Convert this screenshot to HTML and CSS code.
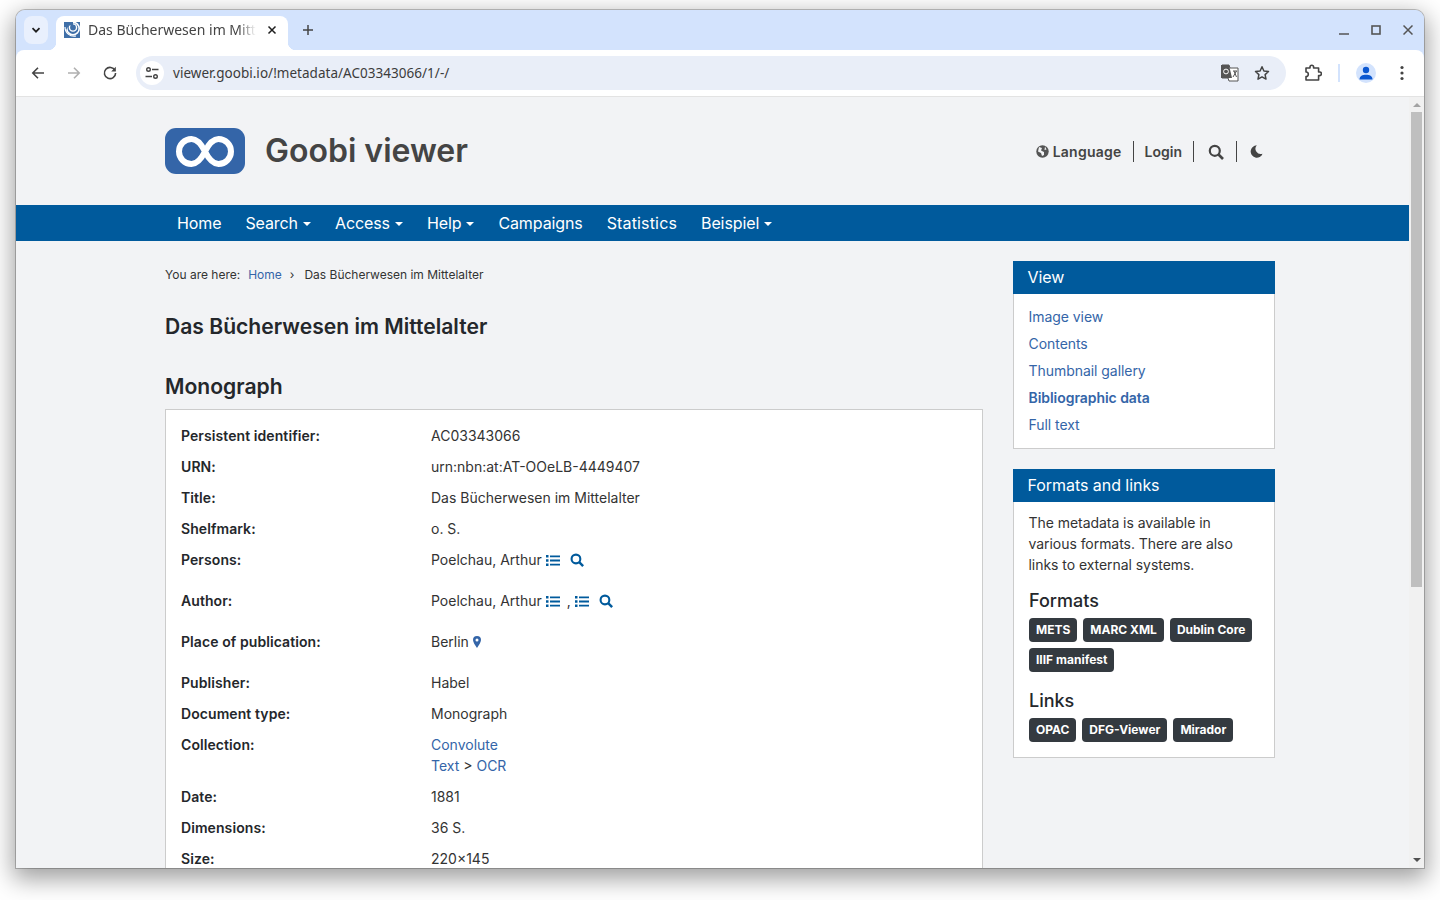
FILE: index.html
```html
<!DOCTYPE html>
<html lang="en">
<head>
    <meta charset="UTF-8">
    <title>Das Bücherwesen im Mittelalter</title>
    <link rel="stylesheet" href="styles.css">
</head>
<body>
<div class="window">
    <div class="tabstrip">
        <div class="tab-menu">
            <svg width="12" height="12" viewBox="0 0 12 12"><path d="M2.5 4.2 6 7.700l3.500-3.500" fill="none" stroke="#1f1f1f" stroke-width="1.700"/></svg>
        </div>
        <div class="tab">
            <svg class="favicon" width="16" height="16" viewBox="0 0 16 16">
                <rect width="16" height="16" fill="#3f6fa8"/>
                <circle cx="9" cy="6.500" r="6.200" fill="none" stroke="#fff" stroke-width="1.600"/>
                <circle cx="9" cy="5.500" r="3.600" fill="none" stroke="#fff" stroke-width="1.400"/>
                <path d="M0 0h9v3.500H5L0 11z" fill="#3f6fa8"/>
                <path d="M1 5c0 6 5 10 11 9" fill="none" stroke="#fff" stroke-width="1.200"/>
            </svg>
            <span class="tab-title">Das Bücherwesen im Mittelalter</span>
            <svg class="tab-close" width="10" height="10" viewBox="0 0 10 10"><path d="M1.500 1.500l7 7m0-7l-7 7" stroke="#1f1f1f" stroke-width="1.500"/></svg>
        </div>
        <svg class="new-tab" width="12" height="12" viewBox="0 0 12 12"><path d="M6 1v10M1 6h10" stroke="#444" stroke-width="1.500"/></svg>
        <div class="window-controls">
            <svg width="10" height="10" viewBox="0 0 10 10"><path d="M0 9h10" stroke="#555" stroke-width="1.500"/></svg>
            <svg width="10" height="10" viewBox="0 0 10 10"><rect x="1" y="1" width="8" height="8" fill="none" stroke="#555" stroke-width="1.600"/></svg>
            <svg width="10" height="10" viewBox="0 0 10 10"><path d="M.5.5l9 9m0-9l-9 9" stroke="#555" stroke-width="1.500"/></svg>
        </div>
    </div>

    <div class="toolbar">
        <div class="nav-buttons">
            <svg width="16" height="16" viewBox="0 0 16 16"><path d="M14 8H3M8 2.800 2.800 8 8 13.200" fill="none" stroke="#444" stroke-width="1.600"/></svg>
            <svg width="16" height="16" viewBox="0 0 16 16"><path d="M2 8h11M8 2.800 13.200 8 8 13.200" fill="none" stroke="#b0b0b0" stroke-width="1.600"/></svg>
            <svg width="16" height="16" viewBox="0 0 16 16"><path d="M13 5.500A5.600 5.600 0 1 0 13.600 8" fill="none" stroke="#444" stroke-width="1.600"/><path d="M13.800 1.800v4.600H9.200z" fill="#444"/></svg>
        </div>
        <div class="omnibox">
            <div class="site-info">
                <svg width="14" height="14" viewBox="0 0 14 14" fill="none" stroke="#444" stroke-width="1.400"><circle cx="3.500" cy="3.500" r="1.800"/><path d="M7 3.500h6.500M.5 10.500H7"/><circle cx="10.500" cy="10.500" r="1.800"/></svg>
            </div>
            <span class="url">viewer.goobi.io/!metadata/AC03343066/1/-/</span>
            <svg class="omni-translate" width="20" height="18" viewBox="0 0 20 18">
                <path d="M2 1h7l1 3h8v13H9l-1-3H2z" fill="#fff" stroke="#555" stroke-width="1"/>
                <path d="M1 1h8l3 13H1z" fill="#555"/>
                <circle cx="6" cy="7.500" r="2.400" fill="none" stroke="#fff" stroke-width="1"/>
                <path d="M13 7h4m-3 0 2.500 6M16.500 7 13 13" fill="none" stroke="#555" stroke-width="1"/>
            </svg>
            <svg class="omni-star" width="16" height="16" viewBox="0 0 16 16"><path d="M8 1.800l1.900 4.200 4.600.5-3.400 3.100.9 4.500L8 11.800l-4 2.300.9-4.500L1.500 6.500l4.600-.5z" fill="none" stroke="#444" stroke-width="1.500" stroke-linejoin="round"/></svg>
        </div>
        <svg class="ext-icon" width="18" height="18" viewBox="0 0 18 18"><path d="M2 4h4V3a1.800 1.800 0 0 1 3.600 0v1h5v4h1a1.800 1.800 0 0 1 0 3.600h-1V16H2v-3.500c1.800 0 2.300-1.200 2.300-2.300S3.800 8 2 8z" fill="none" stroke="#444" stroke-width="1.600" stroke-linejoin="round"/></svg>
        <span class="toolbar-sep"></span>
        <div class="avatar">
            <svg width="14" height="14" viewBox="0 0 14 14" fill="#0b57d0"><circle cx="7" cy="4" r="3.200"/><path d="M.5 13.500c0-3.500 3-4.800 6.500-4.800s6.500 1.300 6.500 4.800z"/></svg>
        </div>
        <svg class="menu-dots" width="4" height="16" viewBox="0 0 4 16" fill="#444"><circle cx="2" cy="2.500" r="1.600"/><circle cx="2" cy="8" r="1.600"/><circle cx="2" cy="13.500" r="1.600"/></svg>
    </div>

    <div class="viewport">
        <div class="page">
            <header class="site-header">
                <div class="brand">
                    <svg class="logo" width="80" height="46" viewBox="0 0 80 46">
                        <rect width="80" height="46" rx="11" fill="#3465a8"/>
                        <path d="M40 23.500C36 15.500 32 11 26.500 11a12.500 12.500 0 0 0 0 25c5.500 0 9.500-4.500 13.500-12.500S48 11 53.500 11a12.500 12.500 0 0 1 0 25c-5.500 0-9.500-4.500-13.500-12.500z" fill="none" stroke="#fff" stroke-width="6"/>
                    </svg>
                    <span class="brand-name">Goobi viewer</span>
                </div>
                <div class="header-links">
                    <a class="header-link link-lang">
                        <svg width="13" height="13" viewBox="0 0 13 13"><circle cx="6.500" cy="6.500" r="6.200" fill="#555"/><path d="M3 2l3 1-1 2.500 3 1.500v3l-2 1-1-3-3-1.500zM9 1.500l1.500 3-2 .5z" fill="#f2f3f5"/></svg>
                        Language
                    </a>
                    <a class="header-link">Login</a>
                    <a class="header-link link-search">
                        <svg width="16" height="16" viewBox="0 0 16 16" fill="none" stroke="#444" stroke-width="2.200"><circle cx="6.800" cy="6.800" r="5"/><path d="M10.500 10.500 15 15" stroke-width="2.600"/></svg>
                    </a>
                    <a class="header-link link-theme">
                        <svg width="13" height="13" viewBox="0 0 14 14"><path d="M7.300.4A6.600 6.600 0 1 0 13.500 9.300 5.600 5.600 0 0 1 7.300.4z" fill="#444"/></svg>
                    </a>
                </div>
            </header>

            <nav class="main-nav">
                <a>Home</a>
                <a class="caret">Search</a>
                <a class="caret">Access</a>
                <a class="caret">Help</a>
                <a>Campaigns</a>
                <a class="nav-wide">Statistics</a>
                <a class="caret">Beispiel</a>
            </nav>

            <div class="columns">
                <main class="content">
                    <div class="breadcrumb">
                        <span>You are here:</span>
                        <a>Home</a>
                        <span class="crumb-sep">›</span>
                        <span class="crumb-current">Das Bücherwesen im Mittelalter</span>
                    </div>
                    <h1>Das Bücherwesen im Mittelalter</h1>
                    <h2>Monograph</h2>
                    <div class="meta-box">
                        <div class="meta-row"><div class="meta-label">Persistent identifier:</div><div>AC03343066</div></div>
                        <div class="meta-row"><div class="meta-label">URN:</div><div>urn:nbn:at:AT-OOeLB-4449407</div></div>
                        <div class="meta-row"><div class="meta-label">Title:</div><div>Das Bücherwesen im Mittelalter</div></div>
                        <div class="meta-row"><div class="meta-label">Shelfmark:</div><div>o. S.</div></div>
                        <div class="meta-row tall">
                            <div class="meta-label">Persons:</div>
                            <div class="meta-value">Poelchau, Arthur
                                <svg class="list-icon" width="14" height="11" viewBox="0 0 14 11"><use href="#icon-list"/></svg>
                                <svg class="search-icon" width="14" height="14" viewBox="0 0 16 16"><use href="#icon-search"/></svg>
                            </div>
                        </div>
                        <div class="meta-row tall">
                            <div class="meta-label">Author:</div>
                            <div class="meta-value">Poelchau, Arthur
                                <svg class="list-icon" width="14" height="11" viewBox="0 0 14 11"><use href="#icon-list"/></svg>
                                <span class="comma">,</span>
                                <svg class="list-icon" width="14" height="11" viewBox="0 0 14 11"><use href="#icon-list"/></svg>
                                <svg class="search-icon" width="14" height="14" viewBox="0 0 16 16"><use href="#icon-search"/></svg>
                            </div>
                        </div>
                        <div class="meta-row tall">
                            <div class="meta-label">Place of publication:</div>
                            <div class="meta-value">Berlin
                                <svg class="pin-icon" width="8" height="12" viewBox="0 0 8 12"><path fill-rule="evenodd" d="M4 0a4 4 0 0 1 4 4c0 2.300-2.400 5.500-4 8C2.400 9.500 0 6.300 0 4a4 4 0 0 1 4-4zm0 2.500a1.500 1.500 0 1 0 0 3 1.500 1.500 0 0 0 0-3z" fill="#3465a8"/></svg>
                            </div>
                        </div>
                        <div class="meta-row"><div class="meta-label">Publisher:</div><div>Habel</div></div>
                        <div class="meta-row"><div class="meta-label">Document type:</div><div>Monograph</div></div>
                        <div class="meta-row">
                            <div class="meta-label">Collection:</div>
                            <div><a>Convolute</a><br><a>Text</a> &gt; <a>OCR</a></div>
                        </div>
                        <div class="meta-row"><div class="meta-label">Date:</div><div>1881</div></div>
                        <div class="meta-row"><div class="meta-label">Dimensions:</div><div>36 S.</div></div>
                        <div class="meta-row"><div class="meta-label">Size:</div><div>220×145</div></div>
                    </div>
                </main>

                <aside class="sidebar">
                    <section class="widget">
                        <h3>View</h3>
                        <div class="widget-body view-links">
                            <a>Image view</a>
                            <a>Contents</a>
                            <a>Thumbnail gallery</a>
                            <a class="active">Bibliographic data</a>
                            <a>Full text</a>
                        </div>
                    </section>
                    <section class="widget">
                        <h3>Formats and links</h3>
                        <div class="widget-body formats">
                            <p>The metadata is available in various formats. There are also links to external systems.</p>
                            <h4>Formats</h4>
                            <div class="badges">
                                <span class="badge">METS</span>
                                <span class="badge">MARC XML</span>
                                <span class="badge">Dublin Core</span>
                                <span class="badge">IIIF manifest</span>
                            </div>
                            <h4 class="links-title">Links</h4>
                            <div class="badges">
                                <span class="badge">OPAC</span>
                                <span class="badge">DFG-Viewer</span>
                                <span class="badge">Mirador</span>
                            </div>
                        </div>
                    </section>
                </aside>
            </div>
        </div>

        <div class="scrollbar">
            <span class="arrow-up"></span>
            <span class="thumb"></span>
            <span class="arrow-down"></span>
        </div>
    </div>
</div>

<svg class="icon-defs" width="0" height="0">
    <symbol id="icon-list" viewBox="0 0 14 11">
        <path d="M0 0h2.500v2.500H0zM0 4.200h2.500v2.500H0zM0 8.400h2.500v2.500H0zM4 .4h10v1.800H4zM4 4.600h10v1.800H4zM4 8.800h10v1.800H4z" fill="#005a9c"/>
    </symbol>
    <symbol id="icon-search" viewBox="0 0 16 16">
        <circle cx="6.800" cy="6.800" r="5" fill="none" stroke="#005a9c" stroke-width="2.400"/>
        <path d="M10.500 10.500 15 15" stroke="#005a9c" stroke-width="2.800"/>
    </symbol>
</svg>
</body>
</html>
```

FILE: styles.css
```css
* {
    box-sizing: border-box;
}
html, body {
    height: 900px;
}
body {
    margin: 0;
    padding: 10px 16px 0;
    background-color: #fff;
    font-family: Inter, "Liberation Sans", sans-serif;
    font-size: 14px;
    line-height: 21px;
    color: #333;
}
.icon-defs {
    display: block;
    height: 0;
}

/* browser window */
.window {
    width: 1408px;
    height: 858px;
    border-radius: 9px 9px 0 0;
    overflow: hidden;
    display: flex;
    flex-direction: column;
    background-color: #d3e3fd;
    box-shadow: 0 0 0 1px rgba(0, 0, 0, 0.22), 0 8px 24px 3px rgba(0, 0, 0, 0.38);
}
.tabstrip {
    height: 40px;
    flex: none;
    background-color: #d3e3fd;
    display: flex;
    align-items: flex-start;
    padding: 6px 0 0 8px;
    font-family: "Noto Sans", sans-serif;
}
.tab-menu {
    width: 24px;
    height: 28px;
    border-radius: 8px;
    background-color: #e9f0fd;
    display: flex;
    align-items: center;
    justify-content: center;
}
.tab {
    width: 232px;
    height: 34px;
    margin-left: 8px;
    padding: 0 11px 6px 8px;
    background-color: #fff;
    border-radius: 8px 8px 0 0;
    display: flex;
    align-items: center;
    position: relative;
}
.tab::before,
.tab::after {
    content: "";
    position: absolute;
    bottom: 0;
    width: 8px;
    height: 8px;
}
.tab::before {
    left: -8px;
    background: radial-gradient(circle at 0 0, transparent 8px, #fff 8.500px);
}
.tab::after {
    right: -8px;
    background: radial-gradient(circle at 100% 0, transparent 8px, #fff 8.500px);
}
.favicon {
    flex: none;
}
.tab-title {
    margin: 0 0 2px 8px;
    width: 170px;
    flex: none;
    white-space: nowrap;
    overflow: hidden;
    font-size: 14px;
    color: #444;
    -webkit-mask-image: linear-gradient(to right, #000 150px, transparent 168px);
    mask-image: linear-gradient(to right, #000 150px, transparent 168px);
}
.tab-close {
    margin-left: 9px;
    flex: none;
}
.new-tab {
    margin: 8px 0 0 14px;
    flex: none;
}
.window-controls {
    margin-left: auto;
    padding: 9px 11px 0 0;
    display: flex;
    gap: 22px;
}
.toolbar {
    height: 47px;
    flex: none;
    background-color: #fff;
    border-bottom: 1px solid #e3e3e3;
    border-radius: 8px 8px 0 0;
    display: flex;
    align-items: center;
    padding: 0 0 1px 14px;
    font-family: "Noto Sans", sans-serif;
}
.nav-buttons {
    display: flex;
    gap: 20px;
}
.omnibox {
    width: 1150px;
    height: 34px;
    margin-left: 18px;
    padding: 0 16px 0 4px;
    border-radius: 17px;
    background-color: #e9eef8;
    display: flex;
    align-items: center;
}
.site-info {
    width: 24px;
    height: 24px;
    border-radius: 50%;
    background-color: #fff;
    display: flex;
    align-items: center;
    justify-content: center;
}
.url {
    margin: 1px 0 0 9px;
    font-size: 13.500px;
    letter-spacing: 0.03px;
    color: #3c3c3c;
}
.omni-translate {
    margin-left: auto;
}
.omni-star {
    margin-left: 14px;
}
.ext-icon {
    margin-left: 18px;
}
.toolbar-sep {
    width: 2px;
    height: 18px;
    margin-left: 16px;
    background-color: #d3e3fd;
}
.avatar {
    width: 20px;
    height: 20px;
    margin-left: 16px;
    border-radius: 50%;
    background-color: #d3e3fd;
    display: flex;
    align-items: center;
    justify-content: center;
}
.menu-dots {
    margin-left: 24px;
}

/* page inside the browser */
.viewport {
    flex: 1;
    min-height: 0;
    display: flex;
    background-color: #f2f3f5;
}
.page {
    flex: 1;
    min-width: 0;
    overflow: hidden;
}
.scrollbar {
    width: 15px;
    flex: none;
    background-color: #f1f1f1;
    display: flex;
    flex-direction: column;
    align-items: center;
}
.arrow-up {
    margin-top: 6px;
    border: 4px solid transparent;
    border-top: 0;
    border-bottom: 4px solid #a3a3a3;
}
.thumb {
    width: 11px;
    height: 475px;
    margin-top: 5px;
    background-color: #bfbfbf;
}
.arrow-down {
    margin-top: auto;
    margin-bottom: 6px;
    border: 4px solid transparent;
    border-bottom: 0;
    border-top: 4px solid #505050;
}

/* site header */
.site-header {
    height: 108px;
    padding: 31px 134px 0 149px;
    display: flex;
    justify-content: space-between;
    align-items: flex-start;
}
.brand {
    display: flex;
    align-items: center;
    gap: 20px;
}
.logo {
    display: block;
}
.brand-name {
    font-size: 32px;
    font-weight: 600;
    line-height: 46px;
    color: #444;
}
.header-links {
    display: flex;
    align-items: center;
    height: 21px;
    margin-top: 13px;
}
.header-link {
    display: flex;
    align-items: center;
    gap: 4px;
    height: 21px;
    padding: 0 11px;
    font-weight: 600;
    color: #444;
    border-left: 1px solid #444;
}
.header-link:first-child {
    border-left: 0;
}
.link-lang {
    letter-spacing: 0.25px;
}
.link-search {
    padding: 0 12px 0 14px;
}
.link-theme {
    padding: 0 12px 0 13px;
}
.main-nav {
    height: 36px;
    padding-left: 149px;
    background-color: #005a9c;
    display: flex;
    align-items: center;
    letter-spacing: -0.1px;
}
.main-nav a {
    padding: 0 12px;
    font-size: 16px;
    color: #fff;
}
.main-nav .nav-wide {
    letter-spacing: 0.15px;
}
.caret::after {
    content: "";
    display: inline-block;
    margin-left: 5px;
    vertical-align: 3px;
    border: 4px solid transparent;
    border-top: 4px solid #fff;
    border-bottom: 0;
}

/* two columns */
.columns {
    padding: 20px 134px 0 149px;
    display: grid;
    grid-template-columns: 818px 262px;
    gap: 30px;
    align-items: start;
}
a {
    color: #3465a8;
}
.breadcrumb {
    display: flex;
    font-size: 12px;
    line-height: 18px;
    margin-top: 5px;
    color: #333;
}
.breadcrumb a {
    margin-left: 8px;
}
.crumb-sep {
    margin-left: 8px;
}
.crumb-current {
    margin-left: 10px;
}
h1, h2 {
    margin: 0;
    font-size: 21.100px;
    font-weight: 600;
    line-height: 28px;
    color: #24272b;
}
h1 {
    margin-top: 29px;
}
h2 {
    margin-top: 32px;
}
.meta-box {
    margin-top: 8px;
    padding: 15px 15px 0;
    background-color: #fff;
    border: 1px solid #ccc;
}
.meta-row {
    display: grid;
    grid-template-columns: 250px 1fr;
    padding-bottom: 10px;
}
.meta-row.tall {
    padding-bottom: 20px;
}
.meta-label {
    font-weight: 600;
    letter-spacing: 0.08px;
    color: #24272b;
}
.meta-value svg {
    vertical-align: -1px;
}
.meta-value .search-icon {
    vertical-align: -2px;
}
.search-icon {
    margin-left: 6px;
}
.comma {
    margin: 0 0 0 3px;
}

/* sidebar */
.sidebar {
    display: flex;
    flex-direction: column;
    gap: 20px;
}
.widget h3 {
    margin: 0;
    height: 33px;
    padding: 0 14.500px;
    background-color: #005a9c;
    color: #fff;
    font-size: 16px;
    font-weight: 400;
    line-height: 33px;
    letter-spacing: -0.05px;
}
.widget-body {
    background-color: #fff;
    border: 1px solid #ccc;
    border-top: 0;
    padding: 10px 15px;
}
.view-links {
    display: flex;
    flex-direction: column;
    gap: 6px;
    padding: 12px 15px 13px 14.500px;
    letter-spacing: -0.05px;
}
.view-links .active {
    font-weight: 600;
}
.formats {
    padding-bottom: 15px;
}
.formats p {
    margin: 0 0 0 -0.500px;
    letter-spacing: -0.05px;
}
.formats h4 {
    margin: 15px 0 6px;
    font-size: 18px;
    font-weight: 500;
    line-height: 22px;
    color: #24272b;
}
.formats .links-title {
    margin-top: 18px;
}
.badges {
    display: flex;
    flex-wrap: wrap;
    gap: 6px;
}
.badge {
    height: 24px;
    padding: 0 7px;
    border-radius: 4px;
    background-color: #343a40;
    color: #fff;
    font-size: 12px;
    font-weight: 700;
    line-height: 23px;
}
```
